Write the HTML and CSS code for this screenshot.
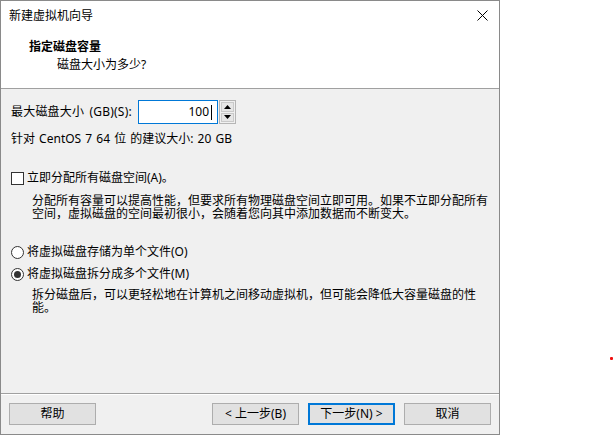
FILE: index.html
```html
<!DOCTYPE html>
<html lang="zh-CN">
<head>
<meta charset="utf-8">
<title>新建虚拟机向导</title>
<link rel="stylesheet" href="styles.css">
</head>
<body>
<div class="page">
  <div class="window">
    <div class="titlebar">
      <span class="title">新建虚拟机向导</span>
      <svg class="close" width="11" height="11" viewBox="0 0 11 11"><path d="M0.5 0.5L10.5 10.5M10.5 0.5L0.5 10.5" stroke="#000" stroke-width="1" fill="none"/></svg>
    </div>
    <div class="header">
      <div class="h-title">指定磁盘容量</div>
      <div class="h-sub">磁盘大小为多少?</div>
    </div>
    <div class="content">
      <div class="size-row">
        <label class="size-label">最大磁盘大小 (GB)(S):</label>
        <div class="input"><span class="val">100</span><span class="caret"></span></div>
        <div class="spin">
          <div class="spin-btn"><svg width="7" height="4" viewBox="0 0 7 4"><path d="M3.5 0L7 4H0z" fill="#000"/></svg></div>
          <div class="spin-btn"><svg width="7" height="4" viewBox="0 0 7 4"><path d="M0 0H7L3.5 4z" fill="#000"/></svg></div>
        </div>
      </div>
      <div class="recommend">针对 CentOS 7 64 位 的建议大小: 20 GB</div>
      <div class="option opt-check"><span class="checkbox"></span><span>立即分配所有磁盘空间(A)。</span></div>
      <div class="desc">
        <div class="line">分配所有容量可以提高性能，但要求所有物理磁盘空间立即可用。如果不立即分配所有</div>
        <div class="line">空间，虚拟磁盘的空间最初很小，会随着您向其中添加数据而不断变大。</div>
      </div>
      <div class="option opt-radio1"><span class="radio"></span><span>将虚拟磁盘存储为单个文件(O)</span></div>
      <div class="option opt-radio2"><span class="radio checked"></span><span>将虚拟磁盘拆分成多个文件(M)</span></div>
      <div class="desc desc2">
        <div class="line">拆分磁盘后，可以更轻松地在计算机之间移动虚拟机，但可能会降低大容量磁盘的性</div>
        <div class="line">能。</div>
      </div>
    </div>
    <div class="footer">
      <button class="btn">帮助</button>
      <div class="spacer"></div>
      <button class="btn">&lt; 上一步(B)</button>
      <button class="btn default">下一步(N) &gt;</button>
      <button class="btn">取消</button>
    </div>
  </div>
  <div class="dot"></div>
</div>
</body>
</html>
```

FILE: styles.css
```css
html, body {
  margin: 0;
  padding: 0;
  background: #ffffff;
}
body {
  font-family: "Noto Sans", "Noto Sans CJK SC", sans-serif;
  font-size: 12px;
  color: #000;
}
.page {
  position: relative;
  width: 615px;
  height: 435px;
}
.window {
  box-sizing: border-box;
  width: 500px;
  height: 435px;
  border: 1px solid #8a8a8a;
  display: flex;
  flex-direction: column;
  background: #f0f0f0;
}
.titlebar {
  height: 30px;
  background: #fff;
  display: flex;
  align-items: center;
  padding: 0 11px 0 8px;
}
.title {
  flex: 1;
  line-height: 30px;
}
.close {
  display: block;
  margin-top: -1px;
}
.header {
  background: #fff;
  padding: 7px 0 14px 0;
  border-bottom: 1px solid #a0a0a0;
}
.h-title {
  font-weight: bold;
  line-height: 18px;
  padding-left: 28px;
}
.h-sub {
  line-height: 18px;
  padding-left: 56px;
}
.content {
  flex: 1;
  padding: 11px 10px 0 10px;
}
.size-row {
  display: flex;
  align-items: center;
  height: 24px;
}
.size-label {
  width: 127px;
  line-height: 16px;
  white-space: nowrap;
  word-spacing: 2px;
  letter-spacing: 0.2px;
}
.input {
  box-sizing: border-box;
  width: 80px;
  height: 24px;
  border: 1px solid #0078d7;
  background: #fff;
  display: flex;
  justify-content: flex-end;
  align-items: center;
  padding-right: 5px;
}
.val {
  line-height: 16px;
}
.caret {
  width: 1px;
  height: 15px;
  background: #000;
  margin-left: 2px;
}
.spin {
  box-sizing: border-box;
  width: 17px;
  height: 24px;
  margin-left: 1px;
  border: 1px solid #b5b5b5;
  padding: 1px;
  display: flex;
  flex-direction: column;
  gap: 1px;
  background: #f0f0f0;
}
.spin-btn {
  flex: 1;
  box-sizing: border-box;
  border: 1px solid #c9c9c9;
  background: #e6e6e6;
  display: flex;
  align-items: center;
  justify-content: center;
}
.spin-btn svg {
  display: block;
}
.recommend {
  margin-top: 7px;
  line-height: 16px;
  word-spacing: 1px;
}
.option {
  display: flex;
  align-items: center;
  height: 16px;
  line-height: 16px;
}
.opt-check {
  margin-top: 23px;
}
.opt-radio1 {
  margin-top: 24px;
}
.opt-radio2 {
  margin-top: 6px;
}
.checkbox {
  box-sizing: border-box;
  width: 13px;
  height: 13px;
  border: 1px solid #333;
  background: #fff;
  margin-right: 3px;
}
.radio {
  box-sizing: border-box;
  width: 13px;
  height: 13px;
  border: 1px solid #333;
  border-radius: 50%;
  background: #fff;
  margin-right: 3px;
  display: flex;
  align-items: center;
  justify-content: center;
}
.radio.checked::after {
  content: "";
  width: 7px;
  height: 7px;
  border-radius: 50%;
  background: #333;
}
.desc {
  margin-top: 8px;
  padding-left: 21px;
  white-space: nowrap;
}
.desc .line {
  height: 13px;
  line-height: 13px;
}
.desc2 {
  margin-top: 6px;
}
.footer {
  display: flex;
  align-items: center;
  gap: 9px;
  height: 40px;
  padding: 0 8px;
  border-top: 1px solid #a0a0a0;
  box-shadow: inset 0 1px 0 #ffffff;
}
.spacer {
  flex: 1;
}
.btn {
  box-sizing: border-box;
  width: 87px;
  height: 22px;
  margin: 0;
  padding: 0;
  border: 1px solid #adadad;
  background: #e1e1e1;
  font-family: "Noto Sans", "Noto Sans CJK SC", sans-serif;
  font-size: 12px;
  color: #000;
  line-height: 18px;
}
.btn.default {
  border: 2px solid #0078d7;
}
.dot {
  position: absolute;
  left: 610px;
  top: 357px;
  width: 3px;
  height: 3px;
  border-radius: 1px;
  background: #f01010;
}
```
